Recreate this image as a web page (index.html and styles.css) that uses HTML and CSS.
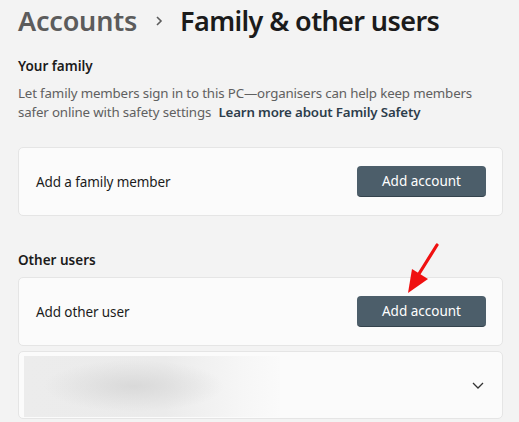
FILE: index.html
```html
<!DOCTYPE html>
<html>
<head>
<meta charset="utf-8">
<link rel="stylesheet" href="styles.css">
</head>
<body>
<div class="page">
  <h1 class="title"><span class="crumb">Accounts</span><span class="sep"><svg width="10" height="12" viewBox="0 0 10 12"><path d="M3 2 L7 6 L3 10" fill="none" stroke="#5c5c5c" stroke-width="1.6"/></svg></span><span class="current">Family &amp; other users</span></h1>

  <h2 class="section">Your family</h2>
  <p class="desc">Let family members sign in to this PC—organisers can help keep members safer online with safety settings <a class="link">Learn more about Family Safety</a></p>

  <div class="card first">
    <span class="label">Add a family member</span>
    <button class="btn">Add account</button>
  </div>

  <h2 class="section other">Other users</h2>
  <div class="card">
    <span class="label">Add other user</span>
    <button class="btn">Add account</button>
  </div>
  <div class="card user">
    <div class="blur"></div>
    <svg class="chev" width="14" height="10" viewBox="0 0 14 10"><path d="M2 3 L7 8 L12 3" fill="none" stroke="#333" stroke-width="1.3"/></svg>
  </div>

  <svg class="arrow" width="60" height="64" viewBox="0 0 60 64"><line x1="47" y1="9" x2="27" y2="41" stroke="#f01010" stroke-width="3.2" stroke-linecap="round"/><polygon points="18,57 22,33 38,43" fill="#f01010"/></svg>
</div>
</body>
</html>
```
FILE: styles.css
```css
html, body { margin: 0; padding: 0; }
body {
  background: #f3f3f3;
  font-family: "Noto Sans", "Open Sans", sans-serif;
  color: #1b1b1b;
  width: 519px;
  height: 422px;
  overflow: hidden;
}
.page {
  position: relative;
  padding: 0 16px 0 18px;
}
.title {
  margin: 0;
  height: 40px;
  display: flex;
  align-items: center;
  font-size: 27px;
  font-weight: 600;
  letter-spacing: -0.2px;
  white-space: nowrap;
}
.crumb { color: #5c5c5c; }
.sep { display: flex; align-items: center; width: 43px; justify-content: center; padding-top: 2px; }
.current { color: #1b1b1b; letter-spacing: -0.6px; }
.section {
  margin: 17px 0 0 0;
  font-size: 13.5px;
  font-weight: 600;
  line-height: 18px;
}
.desc {
  margin: 9px 0 0 0;
  font-size: 13.3px;
  line-height: 18.5px;
  color: #606060;
  letter-spacing: -0.15px;
}
.link { color: #2d3d4b; font-weight: 600; margin-left: 4px; }
.card {
  box-sizing: border-box;
  height: 69px;
  background: #fbfbfb;
  border: 1px solid #e5e5e5;
  border-radius: 5px;
  display: flex;
  align-items: center;
  justify-content: space-between;
  padding: 0 16px 0 17px;
}
.card.first { margin-top: 26px; }
.section.other { margin-top: 35px; }
.section.other + .card { margin-top: 8px; }
.label { font-size: 13.5px; color: #1b1b1b; letter-spacing: -0.1px; }
.btn {
  width: 129px;
  height: 31px;
  border: none;
  border-bottom: 1px solid #34434d;
  border-radius: 4px;
  background: #4c5e6a;
  color: #ffffff;
  font-family: inherit;
  font-size: 13.5px;
  padding: 0;
}
.card.user {
  margin-top: 5px;
  height: 68px;
  padding: 4px 17px 4px 5px;
}
.blur {
  width: 256px;
  height: 61px;
  align-self: stretch;
  background:
    radial-gradient(ellipse 90px 26px at 110px 30px, rgba(215,215,215,0.9), rgba(230,230,230,0) 100%),
    linear-gradient(90deg, #ececec 0%, #ebebeb 55%, #f6f6f6 85%, #fafafa 100%);
}
.chev { display: block; }
.arrow {
  position: absolute;
  left: 390px;
  top: 236px;
}
```
